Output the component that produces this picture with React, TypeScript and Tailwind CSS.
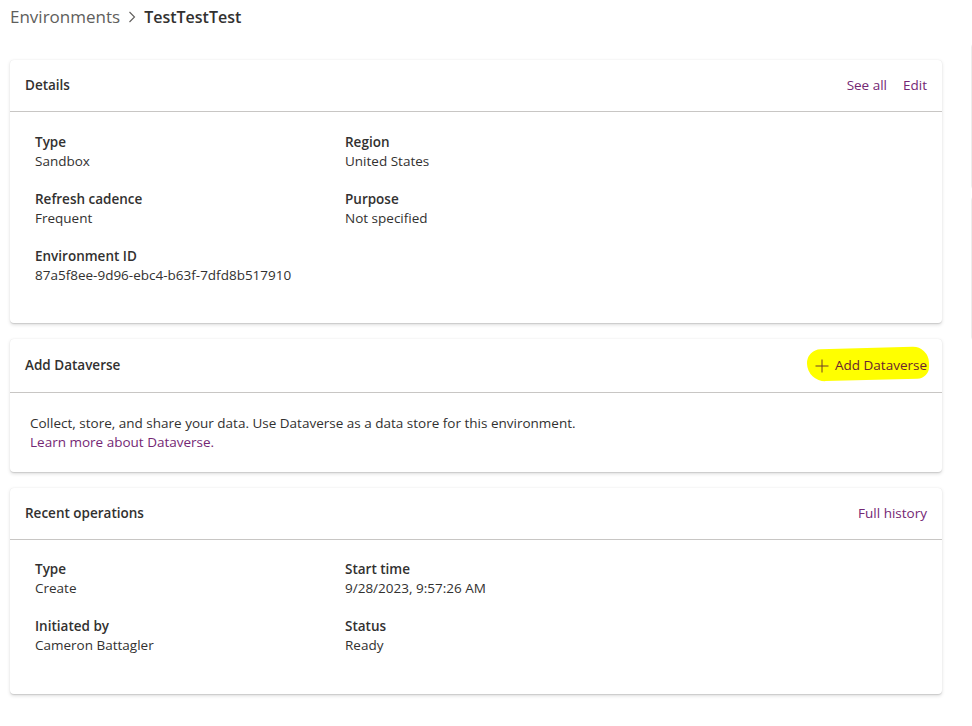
const font = { fontFamily: '"Open Sans", "Noto Sans", sans-serif' };

function Field({ label, value }: { label: string; value: string }) {
  return (
    <div className="flex flex-col">
      <div className="text-[13.5px] leading-[20px] font-semibold text-[#323130]">{label}</div>
      <div className="text-[13.5px] leading-[18px] text-[#323130]">{value}</div>
    </div>
  );
}

function Card({ title, actions, children, headerH = "h-[52px]" }: { title: string; actions: React.ReactNode; children: React.ReactNode; headerH?: string }) {
  return (
    <div className="bg-white rounded-[4px] shadow-[0_1.6px_3.6px_rgba(0,0,0,0.13),0_0.3px_0.9px_rgba(0,0,0,0.11)]">
      <div className={`${headerH} flex items-center justify-between pl-[15px] pr-[15px] border-b border-[#c8c6c4]`}>
        <div className="text-[13.5px] font-semibold text-[#323130]">{title}</div>
        <div className="flex items-center gap-[16px] text-[13.5px] text-[#742774]">{actions}</div>
      </div>
      {children}
    </div>
  );
}

export default function App() {
  return (
    <div className="w-[972px] h-[726px] overflow-hidden bg-white" style={font}>
      <div className="flex items-center h-[34px] pl-[10px] gap-[7px]">
        <span className="text-[17px] text-[#605e5c]">Environments</span>
        <svg width="10" height="14" viewBox="0 0 10 14">
          <path d="M2.5 2 L7.5 7 L2.5 12" fill="none" stroke="#605e5c" strokeWidth="1.1" />
        </svg>
        <span className="text-[16px] font-semibold text-[#323130]">TestTestTest</span>
      </div>

      <div className="flex gap-[29px] mt-[26px]">
        <div className="w-[932px] shrink-0 ml-[10px] flex flex-col gap-[16px]">
          <Card
            title="Details"
            actions={
              <>
                <span>See all</span>
                <span>Edit</span>
              </>
            }
          >
            <div className="pl-[25px] pt-[20px] pb-[39px] grid grid-cols-[310px_1fr] gap-y-[19px]">
              <Field label="Type" value="Sandbox" />
              <Field label="Region" value="United States" />
              <Field label="Refresh cadence" value="Frequent" />
              <Field label="Purpose" value="Not specified" />
              <Field label="Environment ID" value="87a5f8ee-9d96-ebc4-b63f-7dfd8b517910" />
            </div>
          </Card>

          <Card
            title="Add Dataverse"
            headerH="h-[54px]"
            actions={
              <span className="relative flex items-center gap-[6px] text-[#6a2430]">
                <span className="absolute -left-[8px] -right-[2px] -top-[7px] -bottom-[5px] bg-[#ffff00] rounded-[14px_16px_12px_18px] -rotate-[1.5deg]"></span>
                <svg width="14" height="14" viewBox="0 0 14 14" className="relative">
                  <path d="M7 0.5 V13.5 M0.5 7 H13.5" stroke="#6b3a2a" strokeWidth="1" />
                </svg>
                <span className="relative">Add Dataverse</span>
              </span>
            }
          >
            <div className="pl-[20px] pt-[21px] pb-[20px] text-[13.5px] leading-[19px] text-[#323130]">
              <div>Collect, store, and share your data. Use Dataverse as a data store for this environment.</div>
              <div className="text-[#742774]">Learn more about Dataverse.</div>
            </div>
          </Card>

          <Card title="Recent operations" actions={<span>Full history</span>}>
            <div className="pl-[25px] pt-[19px] pb-[40px] grid grid-cols-[310px_1fr] gap-y-[19px]">
              <Field label="Type" value="Create" />
              <Field label="Start time" value="9/28/2023, 9:57:26 AM" />
              <Field label="Initiated by" value="Cameron Battagler" />
              <Field label="Status" value="Ready" />
            </div>
          </Card>
        </div>

        <div className="w-[300px] shrink-0 -mt-[17px] flex flex-col gap-[6px]">
          <div className="h-[147px] rounded-[4px] border border-[#ededed]"></div>
          <div className="h-[145px] rounded-[4px] border border-[#ededed]"></div>
        </div>
      </div>
    </div>
  );
}
